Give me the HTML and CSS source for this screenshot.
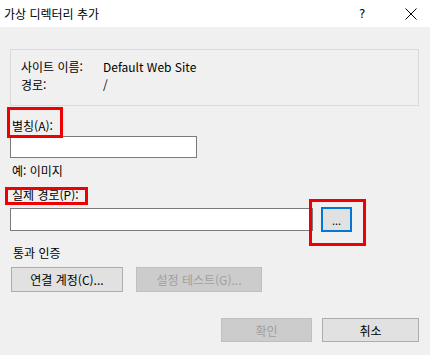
FILE: index.html
```html
<!DOCTYPE html>
<html lang="ko">
<head>
  <meta charset="UTF-8">
  <title>가상 디렉터리 추가</title>
  <link rel="stylesheet" href="styles.css">
</head>
<body>
  <div class="dialog">
    <!-- 제목 표시줄 -->
    <div class="titlebar">
      <span class="title">가상 디렉터리 추가</span>
      <span class="help">?</span>
      <span class="close">
        <svg width="12" height="12" viewBox="0 0 12 12">
          <path d="M0.5 0.5 L11.5 11.5 M11.5 0.5 L0.5 11.5" stroke="#000" stroke-width="1" fill="none"/>
        </svg>
      </span>
    </div>

    <div class="content">
      <!-- 사이트 정보 -->
      <div class="info">
        <div class="info-row"><span class="info-key">사이트 이름:</span><span>Default Web Site</span></div>
        <div class="info-row"><span class="info-key">경로:</span><span>/</span></div>
      </div>

      <div class="label first">별칭(A):</div>
      <input class="field short" type="text">
      <div class="hint">예: 이미지</div>

      <div class="label path">실제 경로(P):</div>
      <div class="path-row">
        <input class="field long" type="text">
        <button class="btn browse">...</button>
      </div>

      <div class="label auth">통과 인증</div>
      <div class="auth-row">
        <button class="btn connect">연결 계정(C)...</button>
        <button class="btn test" disabled>설정 테스트(G)...</button>
      </div>

      <div class="footer">
        <button class="btn ok" disabled>확인</button>
        <button class="btn cancel">취소</button>
      </div>
    </div>

    <!-- 빨간 강조 표시 -->
    <div class="mark mark-alias"></div>
    <div class="mark mark-path"></div>
    <div class="mark mark-browse"></div>
  </div>
</body>
</html>
```
FILE: styles.css
```css
* {
  margin: 0;
  padding: 0;
  box-sizing: border-box;
}

html, body {
  width: 430px;
  height: 355px;
  overflow: hidden;
  font-family: "Noto Sans CJK KR", "Noto Sans", sans-serif;
  font-size: 12px;
  color: #000;
}

.dialog {
  position: relative;
  width: 430px;
  height: 355px;
  background: #f0f0f0;
}

/* 제목 표시줄 */
.titlebar {
  display: flex;
  align-items: center;
  height: 27px;
  padding-left: 4px;
  background: #fff;
}

.title {
  flex: 1;
  font-size: 12px;
  line-height: 18px;
}

.help {
  width: 10px;
  margin-right: 36px;
  font-family: "DejaVu Sans", sans-serif;
  font-size: 12px;
}

.close {
  display: flex;
  width: 12px;
  margin-right: 13px;
}

.content {
  padding: 22px 11px 0 10px;
}

/* 사이트 정보 상자 */
.info {
  height: 57px;
  border: 1px solid #dadada;
  padding: 8px 0 0 10px;
}

.info-row {
  display: flex;
  line-height: 18px;
}

.info-key {
  width: 82px;
}

.label {
  line-height: 18px;
  padding-left: 2px;
}

.label.first {
  margin-top: 11px;
}

.label.path {
  margin-top: 6px;
}

.label.auth {
  margin-top: 12px;
  padding-left: 3px;
}

.hint {
  margin-top: 4px;
  line-height: 18px;
  padding-left: 2px;
}

.field {
  display: block;
  height: 22px;
  border: 1px solid #7a7a7a;
  background: #fff;
  outline: none;
}

.field.short {
  width: 187px;
  margin-top: 1px;
}

.path-row {
  display: flex;
  align-items: center;
  gap: 8px;
  margin-top: 3px;
}

.field.long {
  width: 303px;
  height: 23px;
}

/* 버튼 */
.btn {
  height: 25px;
  font-family: inherit;
  font-size: 12px;
  color: #000;
  background: #e1e1e1;
  border: 1px solid #adadad;
}

.btn:disabled {
  background: #cccccc;
  border-color: #bfbfbf;
  color: #a0a0a0;
}

.btn.browse {
  width: 31px;
  border: 2px solid #0078d7;
  font-size: 11px;
}

.auth-row {
  display: flex;
  gap: 13px;
  margin-top: 5px;
  padding-left: 1px;
}

.btn.connect {
  width: 112px;
}

.btn.test {
  width: 126px;
}

.footer {
  display: flex;
  justify-content: flex-end;
  gap: 10px;
  margin-top: 26px;
}

.btn.ok {
  width: 91px;
  height: 24px;
}

.btn.cancel {
  width: 97px;
  height: 24px;
}

/* 강조 표시 */
.mark {
  position: absolute;
  border: 3px solid #f00000;
}

.mark-alias {
  left: 7px;
  top: 107px;
  width: 56px;
  height: 31px;
}

.mark-path {
  left: 5px;
  top: 187px;
  width: 83px;
  height: 18px;
}

.mark-browse {
  left: 309px;
  top: 199px;
  width: 57px;
  height: 47px;
}
```
